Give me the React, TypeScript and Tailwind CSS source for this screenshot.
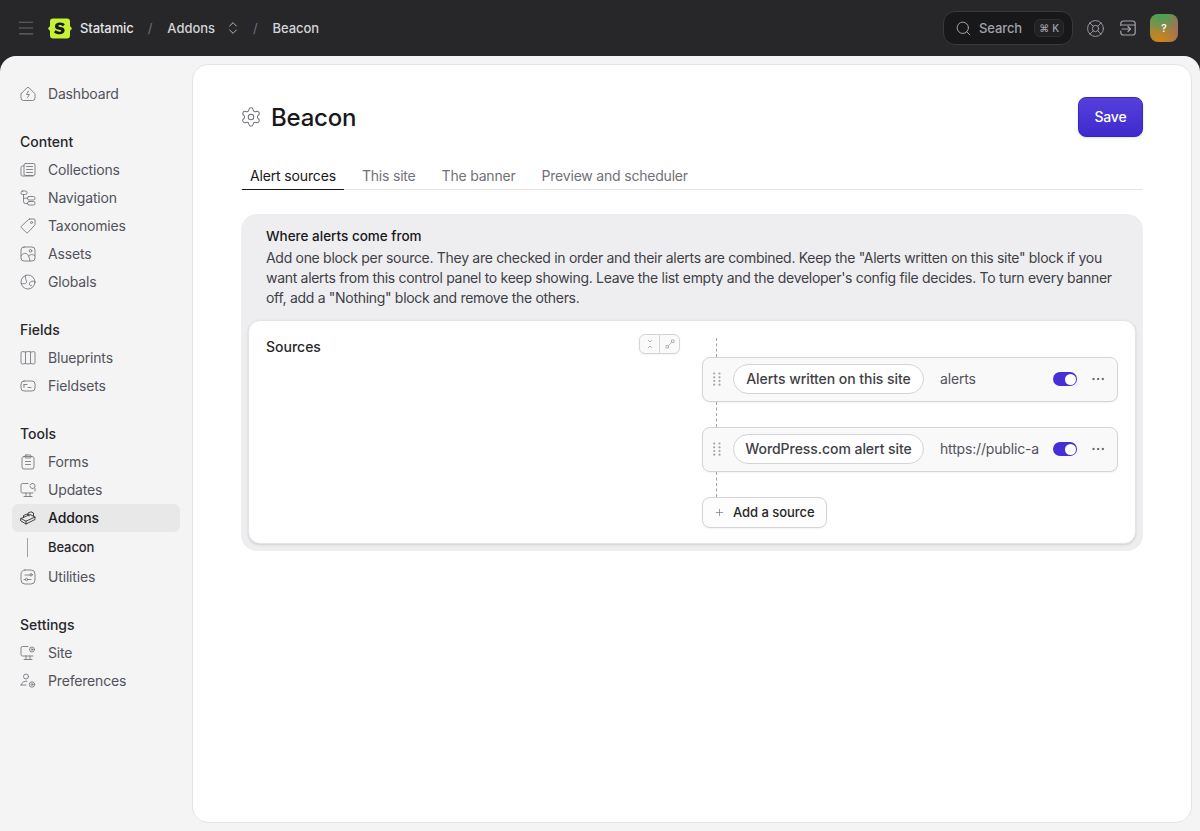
import { ChevronsUpDown, Ellipsis, LifeBuoy, Menu, Plus, Search, Settings } from "lucide-react";
import type { ReactNode } from "react";

function Ico({ children }: { children: ReactNode }) {
  return (
    <svg viewBox="0 0 16 16" fill="none" stroke="currentColor" strokeWidth="0.85" strokeLinecap="round" strokeLinejoin="round" className="h-4 w-4 shrink-0">
      {children}
    </svg>
  );
}

const icons: Record<string, ReactNode> = {
  dashboard: <><path d="M1.300 7.500 6.700 2a1.800 1.800 0 0 1 2.600 0l5.400 5.500a1 1 0 0 1 .3.700V12a2.500 2.500 0 0 1-2.500 2.500h-9A2.500 2.500 0 0 1 1 12V8.200a1 1 0 0 1 .3-.7z" /><path d="M8.500 5 6.500 8.500h3L7.500 11.500" /></>,
  collections: <><rect x="4" y="1.500" width="11" height="12" rx="1.500" /><path d="M6.500 4.500h6M6.500 7.500h6M6.500 10.500h6" /><path d="M4 4H2.500A1.500 1.500 0 0 0 1 5.500v7a1.500 1.500 0 0 0 1.500 1.500H13" /></>,
  navigation: <><rect x="1" y="1" width="6" height="3.500" rx="1.500" /><rect x="7.500" y="6.500" width="7.500" height="3.500" rx="1.500" /><rect x="7.500" y="11.500" width="7.500" height="3.500" rx="1.500" /><path d="M3.500 4.500v7a2 2 0 0 0 2 2h2M3.500 8.200h4" /></>,
  taxonomies: <><path d="M9.500 1H14a1 1 0 0 1 1 1v4.500a1 1 0 0 1-.3.700L7.800 14.600a1 1 0 0 1-1.400 0L1.400 9.600a1 1 0 0 1 0-1.400L8.800 1.300A1 1 0 0 1 9.500 1z" /><circle cx="11.500" cy="4.500" r="1" /></>,
  assets: <><rect x="1" y="1" width="14" height="14" rx="3" /><circle cx="10.500" cy="4.800" r="1.300" /><path d="M1 10c2-3 4.500-3.500 6.500-1.500 1 1 2 3 2.500 6.500" /><path d="M8.500 10c2-2 4.500-2 6.500 0" /></>,
  globals: <><circle cx="8" cy="8" r="7" /><path d="M5.500 1.500C4.500 5 7 6 6.500 8.500 6.200 10 3 10 1.300 9.500" /><path d="M15 8c-2-1.500-4.500-1-5.500 1-.7 1.500.5 3 2 2.500" /></>,
  blueprints: <><path d="M1 3a1.500 1.500 0 0 1 1.500-1.500c1 0 2 .5 3 .5s2-.5 3-.5 2 .5 3 .5 1.500-.5 2-.5A1.500 1.500 0 0 1 15 3v9.500a1.500 1.500 0 0 1-1.500 1.500c-1 0-2-.5-3-.5s-1.500.5-2.500.5-2-.5-3-.5-1.500.5-2.500.5A1.500 1.500 0 0 1 1 12.500z" /><path d="M5.500 2v11.500M10.500 2v11.500" /></>,
  fieldsets: <><rect x="1" y="3" width="14" height="10" rx="3" /><path d="M4 6.500h3M4 6.500v3M8 9.500h3" /></>,
  forms: <><rect x="2" y="2.500" width="12" height="12.500" rx="2" /><rect x="5" y="1" width="6" height="3" rx="1" /><path d="M5.500 7.500h5M5.500 10.500h5" /></>,
  updates: <><path d="M8 1.500H2.500A1.500 1.500 0 0 0 1 3v6.500A1.500 1.500 0 0 0 2.500 11H13" /><path d="M6 11v3.500M10 11v3.500M4 14.500h8" /><path d="M10 4a2.500 2.500 0 1 0 1-2l-.7.7M15 6.500V9" /></>,
  addons: <><path d="M1 8.500 10 4.500l5 2.500v2.500l-9 4.500-5-3z" /><path d="M1 8.500l5 2.700 9-4.200M6 11.200V14" /><path d="M3.500 7.300V5.500L7 4l2 1v1M8 4.500V3l3-1.200 2.500 1.200v2.800" /></>,
  utilities: <><rect x="1" y="1" width="14" height="14" rx="4" /><path d="M5 6h5" /><circle cx="11" cy="5.800" r="1.200" /><circle cx="6.500" cy="10.500" r="1.200" /><path d="M8 10.500h3M4 10.500h1.200" /></>,
  site: <><path d="M8 1.500H2.500A1.500 1.500 0 0 0 1 3v6.500A1.500 1.500 0 0 0 2.500 11H13" /><path d="M6 11v3.500M10 11v3.500M4 14.500h8" /><circle cx="12" cy="4.500" r="2.500" /><circle cx="12" cy="4.500" r=".8" /></>,
  preferences: <><circle cx="6" cy="3.500" r="2.500" /><path d="M1 12a5 5 0 0 1 6-3.800M1 12h5" /><circle cx="12" cy="11.500" r="2.700" /><circle cx="12" cy="11.500" r=".9" /></>,
};

type NavItem = { id: string; label: string; active?: boolean };

const nav: { title?: string; items: NavItem[] }[] = [
  { items: [{ id: "dashboard", label: "Dashboard" }] },
  {
    title: "Content",
    items: [
      { id: "collections", label: "Collections" },
      { id: "navigation", label: "Navigation" },
      { id: "taxonomies", label: "Taxonomies" },
      { id: "assets", label: "Assets" },
      { id: "globals", label: "Globals" },
    ],
  },
  {
    title: "Fields",
    items: [
      { id: "blueprints", label: "Blueprints" },
      { id: "fieldsets", label: "Fieldsets" },
    ],
  },
  {
    title: "Tools",
    items: [
      { id: "forms", label: "Forms" },
      { id: "updates", label: "Updates" },
      { id: "addons", label: "Addons", active: true },
      { id: "utilities", label: "Utilities" },
    ],
  },
  {
    title: "Settings",
    items: [
      { id: "site", label: "Site" },
      { id: "preferences", label: "Preferences" },
    ],
  },
];

function Sidebar() {
  return (
    <aside className="flex w-[192px] shrink-0 flex-col gap-5 pt-6 pr-3 pl-3 text-sm">
      {nav.map((group, i) => (
        <div key={i}>
          {group.title && <div className="flex h-7 items-center pl-2 font-medium text-[#27272a]">{group.title}</div>}
          {group.items.map((item) => (
            <div key={item.id}>
              <div
                className={
                  item.active
                    ? "flex h-7 items-center gap-3 rounded-md bg-[#e8e8e9] pl-2 text-[#18181b]"
                    : "flex h-7 items-center gap-3 pl-2 text-[#52525b]"
                }
              >
                <span className={item.active ? "text-[#27272a]" : "text-[#71717a]"}>
                  <Ico>{icons[item.id]}</Ico>
                </span>
                <span className={item.active ? "font-medium tracking-[-0.1px]" : "tracking-[-0.17px]"}>{item.label}</span>
              </div>
              {item.active && (
                <div className="flex h-[31px] items-center">
                  <div className="ml-[15px] h-[19px] w-px bg-[#a1a1aa]" />
                  <span className="ml-5 text-[13px] font-medium tracking-[-0.1px] text-[#27272a]">Beacon</span>
                </div>
              )}
            </div>
          ))}
        </div>
      ))}
    </aside>
  );
}

function TopBar() {
  return (
    <header className="flex h-14 shrink-0 items-center pr-[22px] pl-4 text-[13px] text-[#d4d4d8]">
      <Menu className="h-5 w-5 text-[#66666c]" strokeWidth={1.3} />
      <svg viewBox="0 0 24 21" className="ml-3 h-[21px] w-6">
        <path d="M5 .5h14a3 3 0 0 1 3 3v4.500l2 2.500-2 2.500v4.500a3 3 0 0 1-3 3H5a3 3 0 0 1-3-3V13l-2-2.500L2 8V3.500a3 3 0 0 1 3-3z" fill="#c6f135" />
        <path d="M16.800 6.500C15.800 5.300 14 4.600 12 4.600c-3 0-5 1.400-5 3.600 0 4.600 6.300 2.600 6.300 4.500 0 .6-.7 1-1.800 1-1.400 0-2.800-.6-3.700-1.600l-1.800 2.100c1.300 1.400 3.300 2.100 5.500 2.100 3 0 5.100-1.400 5.100-3.800 0-4.700-6.300-2.700-6.300-4.500 0-.6.600-.9 1.600-.9 1.100 0 2.200.4 3 1.200z" fill="#18181b" />
      </svg>
      <span className="mt-[2px] ml-2 font-medium tracking-[-0.1px] text-[#e4e4e7]">Statamic</span>
      <span className="mt-[2px] ml-[14px] text-[#71717a]">/</span>
      <span className="mt-[2px] ml-[15px] font-medium tracking-[-0.05px]">Addons</span>
      <ChevronsUpDown className="ml-[10px] h-4 w-4 text-[#b4b4bb]" strokeWidth={1.5} />
      <span className="mt-[2px] ml-[12px] text-[#71717a]">/</span>
      <span className="mt-[2px] ml-[15px] font-medium tracking-[-0.1px]">Beacon</span>
      <div className="ml-auto flex h-[34px] w-[130px] items-center rounded-xl border border-[#3a3a3e] bg-[#18181b] pr-[8px] pl-[11px] text-[#a1a1aa]">
        <Search className="h-[17px] w-[17px]" strokeWidth={1.4} />
        <span className="mt-[2px] ml-[7px] font-medium tracking-[-0.1px]">Search</span>
        <span className="ml-auto flex h-[18px] items-center gap-[3px] rounded-md border border-[#2e2e32] bg-[#212124] px-1 text-[10px] font-medium">
          <span>⌘</span>
          <span>K</span>
        </span>
      </div>
      <LifeBuoy className="ml-[13px] h-[19px] w-[19px] text-[#a1a1aa]" strokeWidth={1.15} />
      <svg viewBox="0 0 18 18" fill="none" stroke="currentColor" strokeWidth="1.2" strokeLinecap="round" strokeLinejoin="round" className="ml-[14px] h-[18px] w-[18px] text-[#a1a1aa]">
        <path d="M1.800 6.500V4.500a2.500 2.500 0 0 1 2.500-2.500h9.400a2.500 2.500 0 0 1 2.500 2.500v9a2.500 2.500 0 0 1-2.500 2.500H4.300a2.500 2.500 0 0 1-2.500-2.500V12" />
        <path d="M2.500 6h13M3 10h8.500M9 7.500l2.500 2.500L9 12.500" />
      </svg>
      <div className="ml-[13px] flex h-7 w-7 items-center justify-center rounded-lg bg-[radial-gradient(circle_at_40%_0%,#3fa652_0%,transparent_60%),radial-gradient(circle_at_35%_100%,#d08418_0%,transparent_65%),linear-gradient(90deg,#8f8f45,#a0705a)] text-[10px] font-semibold text-white">?</div>
    </header>
  );
}

function SourceBlock({ name, value }: { name: string; value: string }) {
  return (
    <div className="relative flex h-[45px] items-center rounded-lg border border-[#d4d4d8] bg-[#f9f9fa] pb-px shadow-xs">
      <svg viewBox="0 0 8 14" className="ml-[10px] h-[14px] w-2 shrink-0 fill-[#a1a1aa]">
        <circle cx="1.200" cy="1.500" r="1.100" />
        <circle cx="1.200" cy="5.300" r="1.100" />
        <circle cx="1.200" cy="9" r="1.100" />
        <circle cx="1.200" cy="12.700" r="1.100" />
        <circle cx="6.500" cy="1.500" r="1.100" />
        <circle cx="6.500" cy="5.300" r="1.100" />
        <circle cx="6.500" cy="9" r="1.100" />
        <circle cx="6.500" cy="12.700" r="1.100" />
      </svg>
      <span className="ml-[12px] flex h-[30px] w-[191px] shrink-0 items-center justify-center rounded-full border border-[#d4d4d8] bg-white text-sm font-medium tracking-[-0.05px] text-[#3f3f46]">{name}</span>
      <span className="ml-4 whitespace-nowrap text-sm tracking-[-0.17px] text-[#52525b]">{value}</span>
      <span className="absolute right-[40px] flex h-[14px] w-[24px] items-center justify-end rounded-full bg-[#4430d6] pr-[1.500px]">
        <span className="h-[11px] w-[11px] rounded-full bg-white" />
      </span>
      <Ellipsis className="absolute right-[11px] h-4 w-4 text-[#52525b]" strokeWidth={1.5} />
    </div>
  );
}

function Dash({ className }: { className: string }) {
  return <div className={`ml-[14px] w-0 border-l border-dashed border-[#a1a1aa] ${className}`} />;
}

function SourcesCard() {
  return (
    <section className="mt-6 rounded-2xl bg-[#eeeef0] p-[7px] pt-0">
      <div className="pt-3 pr-3 pb-3 pl-[18px]">
        <h2 className="text-[13.500px] leading-5 font-medium text-[#18181b]">Where alerts come from</h2>
        <p className="mt-[2px] text-sm leading-5 tracking-[-0.3px] text-[#3f3f46]">
          Add one block per source. They are checked in order and their alerts are combined. Keep the "Alerts written on this site" block if you want alerts from this control panel to keep showing. Leave the list empty and the developer's config file decides. To turn every banner off, add a "Nothing" block and remove the others.
        </p>
      </div>
      <div className="relative flex h-[224px] rounded-xl border border-[#e4e4e7] bg-white pt-4 pl-[17px] shadow-sm">
        <div className="relative w-[436px] shrink-0 text-sm leading-5 font-medium text-[#27272a]">
          Sources
          <div className="absolute top-[-3px] right-[22px] flex h-[20px] w-[41px] rounded-md border border-[#d4d4d8] bg-[#fafafa] text-[#a1a1aa] shadow-xs">
            <span className="flex flex-1 items-center justify-center border-r border-[#d4d4d8]">
              <svg viewBox="0 0 10 10" fill="none" stroke="currentColor" strokeWidth=".8" className="h-2.5 w-2.5">
                <path d="M3 1l2 2 2-2M3 9l2-2 2 2" />
              </svg>
            </span>
            <span className="flex flex-1 items-center justify-center">
              <svg viewBox="0 0 10 10" fill="none" stroke="currentColor" strokeWidth=".8" className="h-2.5 w-2.5">
                <path d="M3.500 6.500l3-3M6.500 1h2.500v2.500H6.500zM1 6.500h2.500V9H1z" />
              </svg>
            </span>
          </div>
        </div>
        <div className="w-[416px] shrink-0 pt-px">
          <Dash className="h-[19px]" />
          <SourceBlock name="Alerts written on this site" value="alerts" />
          <Dash className="h-[25px]" />
          <SourceBlock name="WordPress.com alert site" value="https://public-a" />
          <Dash className="h-[25px]" />
          <button className="flex h-[31px] w-[125px] items-center rounded-lg border border-[#d4d4d8] bg-[#fdfdfd] pl-[11px] text-[13px] font-medium tracking-[-0.05px] text-[#27272a] shadow-xs">
            <Plus className="h-[11px] w-[11px] text-[#71717a]" strokeWidth={1.5} />
            <span className="ml-[8px]">Add a source</span>
          </button>
        </div>
      </div>
    </section>
  );
}

export default function App() {
  return (
    <div className="flex h-[831px] flex-col overflow-hidden bg-[#27272a] font-['Inter',sans-serif]">
      <TopBar />
      <div className="flex min-h-0 flex-1 rounded-t-2xl bg-[#f4f4f5]">
        <Sidebar />
        <div className="min-w-0 flex-1 pt-[8px] pr-2 pb-2 pl-0">
          <main className="h-full rounded-2xl border border-[#e4e4e7] bg-white pt-[32px] pr-[48px] pl-[48px]">
            <div className="flex h-10 items-center">
              <Settings className="-ml-px h-[22px] w-[22px] text-[#71717a]" strokeWidth={1.1} />
              <h1 className="mt-[2px] ml-[9px] text-2xl font-medium tracking-[-0.2px] text-[#18181b]">Beacon</h1>
              <button className="ml-auto h-10 w-[65px] rounded-lg border border-[#3a25b8] bg-linear-to-b from-[#5540dc] to-[#3f29cd] text-sm font-medium tracking-[-0.17px] text-white shadow-sm">Save</button>
            </div>
            <nav className="mt-5 flex h-[33px] gap-[10px] border-b border-[#e4e4e7] pl-px text-sm tracking-[-0.2px] text-[#71717a]">
              <span className="-mb-px flex h-[33px] items-end border-b-[1.500px] border-[#18181b] px-2 pb-[3px] tracking-[-0.15px] text-[#18181b]">Alert sources</span>
              <span className="flex h-[32px] items-end px-2 pb-[3px]">This site</span>
              <span className="flex h-[32px] items-end px-2 pb-[3px]">The banner</span>
              <span className="flex h-[32px] items-end px-2 pb-[3px]">Preview and scheduler</span>
            </nav>
            <SourcesCard />
          </main>
        </div>
      </div>
    </div>
  );
}
